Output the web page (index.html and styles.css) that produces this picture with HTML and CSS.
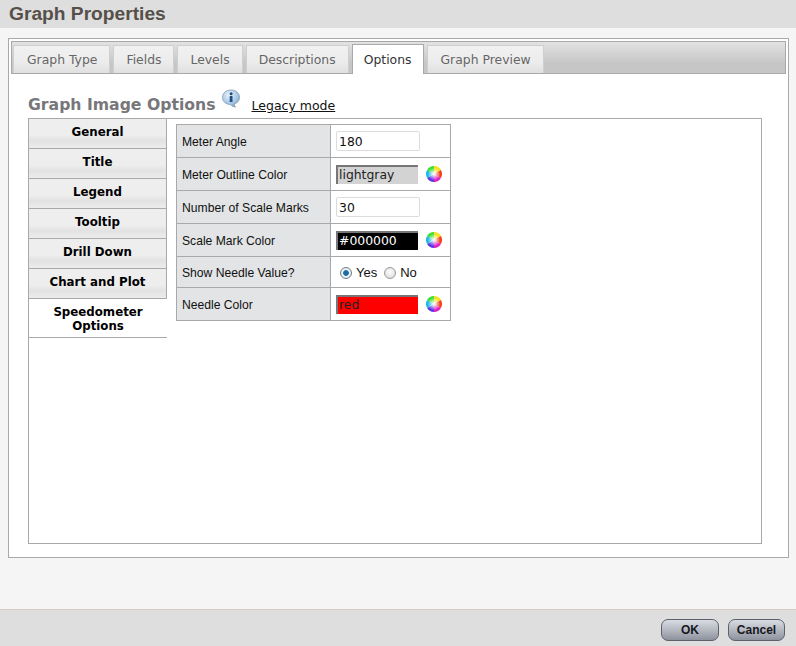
FILE: index.html
```html
<!DOCTYPE html>
<html lang="en">
<head>
<meta charset="utf-8">
<title>Graph Properties</title>
<link rel="stylesheet" href="styles.css">
</head>
<body>
<svg class="defs" width="0" height="0" aria-hidden="true">
  <defs>
    <radialGradient id="white-core"><stop offset="0" stop-color="#fff"/><stop offset="0.2" stop-color="#fff" stop-opacity="0.8"/><stop offset="0.8" stop-color="#fff" stop-opacity="0"/></radialGradient>
    <symbol id="wheel" viewBox="0 0 16 16">
      <path d="M8 8L8 0A8 8 0 0 1 14.9 4Z" fill="#f7e017"/>
      <path d="M8 8L14.9 4A8 8 0 0 1 14.9 12Z" fill="#f5401c"/>
      <path d="M8 8L14.9 12A8 8 0 0 1 8 16Z" fill="#e01cc0"/>
      <path d="M8 8L8 16A8 8 0 0 1 1.1 12Z" fill="#5a34e8"/>
      <path d="M8 8L1.1 12A8 8 0 0 1 1.1 4Z" fill="#1cb8e8"/>
      <path d="M8 8L1.1 4A8 8 0 0 1 8 0Z" fill="#3ce030"/>
      <circle cx="8" cy="8" r="8" fill="url(#white-core)"/>
    </symbol>
  </defs>
</svg>
<div class="page">
  <header class="head"><h1>Graph Properties</h1></header>
  <main class="main">
    <div class="panel">
      <nav class="tabs">
        <a class="tab">Graph Type</a>
        <a class="tab">Fields</a>
        <a class="tab">Levels</a>
        <a class="tab">Descriptions</a>
        <a class="tab active">Options</a>
        <a class="tab">Graph Preview</a>
      </nav>
      <div class="heading">
        <h2>Graph Image Options</h2>
        <svg class="info" viewBox="0 0 20 20" width="20" height="20" aria-hidden="true">
          <defs><radialGradient id="bubble" cx="0.4" cy="0.3" r="0.8"><stop offset="0" stop-color="#e8f2fa"/><stop offset="0.6" stop-color="#a9c8e2"/><stop offset="1" stop-color="#6f98bd"/></radialGradient></defs>
          <path d="M10 1C5 1 1.500 4 1.500 8.500C1.500 12.500 5 15.500 9.500 15.500C10.500 17 12.500 18 14.500 18C13.500 17 13.200 16 13.300 15C16.500 14 18.500 11.500 18.500 8.500C18.500 4 15 1 10 1Z" fill="url(#bubble)" stroke="#7f9bb5" stroke-width="0.8"/>
          <rect x="8.700" y="7" width="2.800" height="6" rx="0.500" fill="#1d4f86"/>
          <circle cx="10.100" cy="4.700" r="1.500" fill="#1d4f86"/>
        </svg>
        <a class="legacy">Legacy mode</a>
      </div>
      <div class="options">
        <ul class="side">
          <li class="side-item">General</li>
          <li class="side-item">Title</li>
          <li class="side-item">Legend</li>
          <li class="side-item">Tooltip</li>
          <li class="side-item">Drill Down</li>
          <li class="side-item">Chart and Plot</li>
          <li class="side-item current">Speedometer Options</li>
        </ul>
        <div class="content">
          <table class="form">
            <tr class="r33"><th>Meter Angle</th><td><input class="text" value="180"></td></tr>
            <tr class="r33"><th>Meter Outline Color</th><td><div class="color-row"><input class="color c-gray" value="lightgray"><svg class="wheel"><use href="#wheel"/></svg></div></td></tr>
            <tr class="r33"><th>Number of Scale Marks</th><td><input class="text" value="30"></td></tr>
            <tr class="r33"><th>Scale Mark Color</th><td><div class="color-row"><input class="color c-black" value="#000000"><svg class="wheel"><use href="#wheel"/></svg></div></td></tr>
            <tr class="r31"><th>Show Needle Value?</th><td>
              <div class="radios">
                <span class="radio on"></span><span class="radio-label">Yes</span>
                <span class="radio"></span><span class="radio-label">No</span>
              </div>
            </td></tr>
            <tr class="r33"><th>Needle Color</th><td><div class="color-row"><input class="color c-red" value="red"><svg class="wheel"><use href="#wheel"/></svg></div></td></tr>
          </table>
        </div>
      </div>
    </div>
  </main>
  <footer class="foot">
    <button class="btn btn-ok">OK</button>
    <button class="btn btn-cancel">Cancel</button>
  </footer>
</div>
</body>
</html>
```
FILE: styles.css
```css
* { box-sizing: border-box; }
html, body { margin: 0; height: 100%; }
body { background: #f5f5f5; font-family: "Liberation Sans", Arial, sans-serif; color: #111; overflow: hidden; }
.defs { position: absolute; }
.page { width: 796px; height: 646px; display: flex; flex-direction: column; }

.head { height: 28px; background: #dedede; padding: 0 9px; }
.head h1 { margin: 0; font: bold 19.200px/27px "Liberation Sans", Arial, sans-serif; color: #555049; }

.main { flex: 1; padding: 10px 8px 0; }
.panel { height: 520px; width: 781px; background: #fff; border: 1px solid #a9a9a9; padding: 2px; display: flex; flex-direction: column; }

.tabs { height: 33px; flex: none; display: flex; gap: 3px; padding: 3px 0 0 1px; border: 1px solid #a9a9a9; background: linear-gradient(#e2e2e2, #c6c6c6 70%); }
.tab { height: 28px; padding: 0 12px; font: 12.400px/27px "DejaVu Sans", Verdana, sans-serif; color: #666; background: linear-gradient(#f1f1f1 0, #ececec 60%, #e0e0e0 100%); border: 1px solid #cfcfcf; border-bottom: 0; }
.tab:first-child { padding: 0 12px 0 13px; }
.tab.active { height: 30px; margin-top: -1px; margin-bottom: -1px; padding: 1px 12px 0 11px; color: #333; background: #fff; border: 1px solid #a9a9a9; border-bottom: 0; }

.heading { height: 44px; flex: none; display: flex; align-items: flex-start; padding: 20px 0 0 17px; }
.heading h2 { margin: 0; font: bold 15.670px/22px "DejaVu Sans", Verdana, sans-serif; color: #77777b; }
.info { margin: -5px 0 0 5px; flex: none; }
.legacy { margin: 3px 0 0 11px; font: 12.500px/18px "DejaVu Sans", Verdana, sans-serif; color: #111; text-decoration: underline; }

.options { width: 734px; height: 426px; margin-left: 17px; border: 1px solid #a9a9a9; display: flex; align-items: flex-start; }
.side { list-style: none; margin: 0; padding: 0; width: 138px; flex: none; }
.side-item { height: 30px; text-align: center; font: bold 11.800px/27px "DejaVu Sans", Verdana, sans-serif; color: #000; border-bottom: 1px solid #a9a9a9; border-right: 1px solid #a9a9a9; background: linear-gradient(#eeeeee 0, #eeeeee 55%, #e2e2e2 75%, #ececec 100%); }
.side-item.current { height: 39px; padding-top: 6px; line-height: 14px; background: #fff; border-right: 0; }

.content { flex: 1; padding: 5px 0 0 9px; }
.form { border-collapse: collapse; width: 275px; table-layout: fixed; }
.form th, .form td { border: 1px solid #a9a9a9; padding: 0; }
.form th { width: 154px; background: #e3e4e6; text-align: left; padding: 2px 0 0 5px; font: 12.150px/16px "Liberation Sans", Arial, sans-serif; color: #111; }
.form td { padding-left: 5px; }
.r33 { height: 33px; }
.r31 { height: 31px; }

.text, .color { display: block; margin: 0; font: 12.400px/18px "DejaVu Sans", Verdana, sans-serif; outline: 0; }
.text { width: 84px; height: 20px; padding: 0 0 0 2px; border: 1px solid #dcdcdc; border-radius: 2px; color: #111; background: #fff; }
.color { width: 82px; height: 19px; padding: 0 0 2px 1px; border-style: solid; border-color: #777; border-width: 2px 0 0 2px; }
.c-gray { background: #d3d3d3; color: #222; }
.c-black { background: #000; color: #fff; }
.c-red { background: #f00; color: #222; }
.color-row { display: flex; align-items: center; gap: 8px; }
.wheel { width: 16px; height: 16px; flex: none; }

.radios { display: flex; align-items: center; padding: 2px 0 0 4px; font: 13px/16px "Liberation Sans", Arial, sans-serif; color: #111; }
.radio { width: 12px; height: 12px; border-radius: 50%; border: 1px solid #9a9a9a; background: radial-gradient(circle at 50% 40%, #fdfdfd, #d6d6d6); flex: none; }
.radio.on { background: radial-gradient(circle, #1a6fa0 0, #1a6fa0 35%, #eef3f7 45%, #dde3e8 100%); border-color: #6f7f8a; }
.radio-label { margin: 0 7px 0 4px; }

.foot { height: 37px; flex: none; background: #dedede; border-top: 1px solid #d5cdc4; display: flex; justify-content: flex-end; gap: 9px; padding: 9px 11px 0 0; }
.btn { height: 22px; padding: 0; border: 1px solid #5c616b; border-radius: 7px; background: linear-gradient(#d9dce2 0, #b4b8c1 50%, #8e929d 100%); font: bold 12px/18px "Liberation Sans", Arial, sans-serif; color: #16181d; }
.btn-ok { width: 58px; }
.btn-cancel { width: 57px; }
```
